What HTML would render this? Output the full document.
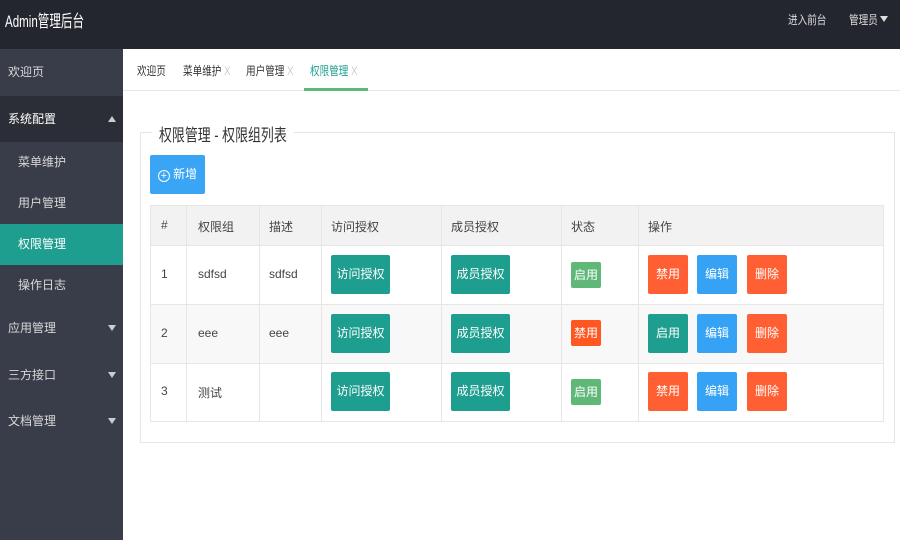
<!DOCTYPE html>
<html><head><meta charset="utf-8"><style>
*{margin:0;padding:0;box-sizing:border-box}
body{width:900px;height:540px;overflow:hidden;position:relative;background:#fff;font-family:"Liberation Sans","Noto Sans CJK SC",sans-serif;font-size:12px;color:#333}
.a{position:absolute}
.n{display:inline-block;transform:scaleX(.8);transform-origin:left;white-space:nowrap}
.hd{left:0;top:0;width:900px;height:49px;background:#23262e;color:#fff}
.sb{left:0;top:49px;width:123px;height:491px;background:#393d49}
.si{position:absolute;left:0;width:123px;color:#d8d8d8;font-size:12px;line-height:20px}
.tri{position:absolute;right:7px;top:7px;width:0;height:0;border-left:4px solid transparent;border-right:4px solid transparent}
.btn{position:absolute;color:#fff;text-align:center;border-radius:2px;font-size:12px}
.b1{height:39px;line-height:39px;width:59px;background:#1e9e8f}
.b2{height:39px;line-height:39px;width:40px}
.sm{height:26px;line-height:26px;width:30px}
.c{position:absolute;font-size:12px;color:#444}
.vl{position:absolute;top:205px;height:216px;width:1px;background:#e6e6e6}
.hl{position:absolute;left:150px;width:734px;height:1px;background:#e6e6e6}
</style></head><body>
<div class="a hd">
  <div class="a n" style="left:5px;top:7px;font-size:17px;color:#fff;transform:scaleX(.68)">Admin管理后台</div>
  <div class="a n" style="left:788px;top:11px;font-size:12px;color:#ddd">进入前台</div>
  <div class="a n" style="left:849px;top:11px;font-size:12px;color:#ddd">管理员</div>
  <div class="a" style="left:880px;top:16px;border-left:4px solid transparent;border-right:4px solid transparent;border-top:6px solid #ddd"></div>
</div>
<div class="a sb">
  <div class="si" style="top:0;height:47px;padding:13px 8px">欢迎页</div>
  <div class="si" style="top:47px;height:46px;background:#2b2e37;padding:13px 8px;color:#fff">系统配置<span class="tri" style="top:20px;right:7px;border-bottom:6px solid #ccc"></span></div>
  <div class="si" style="top:103px;padding:0 18px">菜单维护</div>
  <div class="si" style="top:144px;padding:0 18px">用户管理</div>
  <div class="si" style="top:175px;height:41px;background:#1e9e8f;padding:10px 18px;color:#fff">权限管理</div>
  <div class="si" style="top:226px;padding:0 18px">操作日志</div>
  <div class="si" style="top:269px;padding:0 8px">应用管理<span class="tri" style="border-top:6px solid #ccc"></span></div>
  <div class="si" style="top:316px;padding:0 8px">三方接口<span class="tri" style="border-top:6px solid #ccc"></span></div>
  <div class="si" style="top:362px;padding:0 8px">文档管理<span class="tri" style="border-top:6px solid #ccc"></span></div>
</div>
<div class="a" style="left:123px;top:90px;width:777px;height:1px;background:#e6e6e6"></div>
<div class="a n" style="left:137px;top:62px;color:#333">欢迎页</div>
<div class="a n" style="left:183px;top:62px;color:#333">菜单维护 <span style="color:#ccc">X</span></div>
<div class="a n" style="left:246px;top:62px;color:#333">用户管理 <span style="color:#ccc">X</span></div>
<div class="a n" style="left:310px;top:62px;color:#1e9e8f">权限管理 <span style="color:#ccc">X</span></div>
<div class="a" style="left:304px;top:88px;width:64px;height:3px;background:#5fb878"></div>
<div class="a" style="left:140px;top:132px;width:755px;height:311px;border:1px solid #e6e6e6"></div>
<div class="a" style="left:152px;top:121px;height:20px;width:142px;background:#fff"></div>
<div class="a n" style="left:159px;top:121px;font-size:17px;color:#333;transform:scaleX(.76)">权限管理 - 权限组列表</div>
<div class="btn" style="left:150px;top:155px;width:55px;height:39px;line-height:39px;background:#3aa5f5;border-radius:2px"><span style="display:inline-block;width:12px;height:12px;border:1px solid #fff;border-radius:50%;font-size:11px;line-height:10px;vertical-align:-1px">+</span> 新增</div>
<div class="a" style="left:150px;top:205px;width:734px;height:40px;background:#f2f2f2"></div>
<div class="a" style="left:150px;top:304px;width:734px;height:59px;background:#f8f8f8"></div>
<div class="a" style="left:150px;top:205px;width:734px;height:217px;border:1px solid #e6e6e6"></div>
<div class="hl" style="top:245px"></div><div class="hl" style="top:304px"></div><div class="hl" style="top:363px"></div>
<div class="vl" style="left:186px"></div><div class="vl" style="left:259px"></div><div class="vl" style="left:321px"></div><div class="vl" style="left:441px"></div><div class="vl" style="left:561px"></div><div class="vl" style="left:638px"></div>
<div class="c" style="left:161px;top:218px">#</div>
<div class="c" style="left:198px;top:218px">权限组</div>
<div class="c" style="left:269px;top:218px">描述</div>
<div class="c" style="left:331px;top:218px">访问授权</div>
<div class="c" style="left:451px;top:218px">成员授权</div>
<div class="c" style="left:571px;top:218px">状态</div>
<div class="c" style="left:648px;top:218px">操作</div>

<div class="c" style="left:161px;top:267px">1</div><div class="c" style="left:198px;top:267px">sdfsd</div><div class="c" style="left:269px;top:267px">sdfsd</div>
<div class="c" style="left:161px;top:326px">2</div><div class="c" style="left:198px;top:326px">eee</div><div class="c" style="left:269px;top:326px">eee</div>
<div class="c" style="left:161px;top:384px">3</div><div class="c" style="left:198px;top:384px">测试</div>

<div class="btn b1" style="left:331px;top:255px">访问授权</div><div class="btn b1" style="left:451px;top:255px">成员授权</div>
<div class="btn b1" style="left:331px;top:314px">访问授权</div><div class="btn b1" style="left:451px;top:314px">成员授权</div>
<div class="btn b1" style="left:331px;top:372px">访问授权</div><div class="btn b1" style="left:451px;top:372px">成员授权</div>

<div class="btn sm" style="left:571px;top:262px;background:#5fb878">启用</div>
<div class="btn sm" style="left:571px;top:320px;background:#ff5722">禁用</div>
<div class="btn sm" style="left:571px;top:379px;background:#5fb878">启用</div>

<div class="btn b2" style="left:648px;top:255px;background:#ff5f33">禁用</div><div class="btn b2" style="left:697px;top:255px;background:#35a2f5">编辑</div><div class="btn b2" style="left:747px;top:255px;background:#ff5f33">删除</div>
<div class="btn b2" style="left:648px;top:314px;background:#1e9e8f">启用</div><div class="btn b2" style="left:697px;top:314px;background:#35a2f5">编辑</div><div class="btn b2" style="left:747px;top:314px;background:#ff5f33">删除</div>
<div class="btn b2" style="left:648px;top:372px;background:#ff5f33">禁用</div><div class="btn b2" style="left:697px;top:372px;background:#35a2f5">编辑</div><div class="btn b2" style="left:747px;top:372px;background:#ff5f33">删除</div>
</body></html>
